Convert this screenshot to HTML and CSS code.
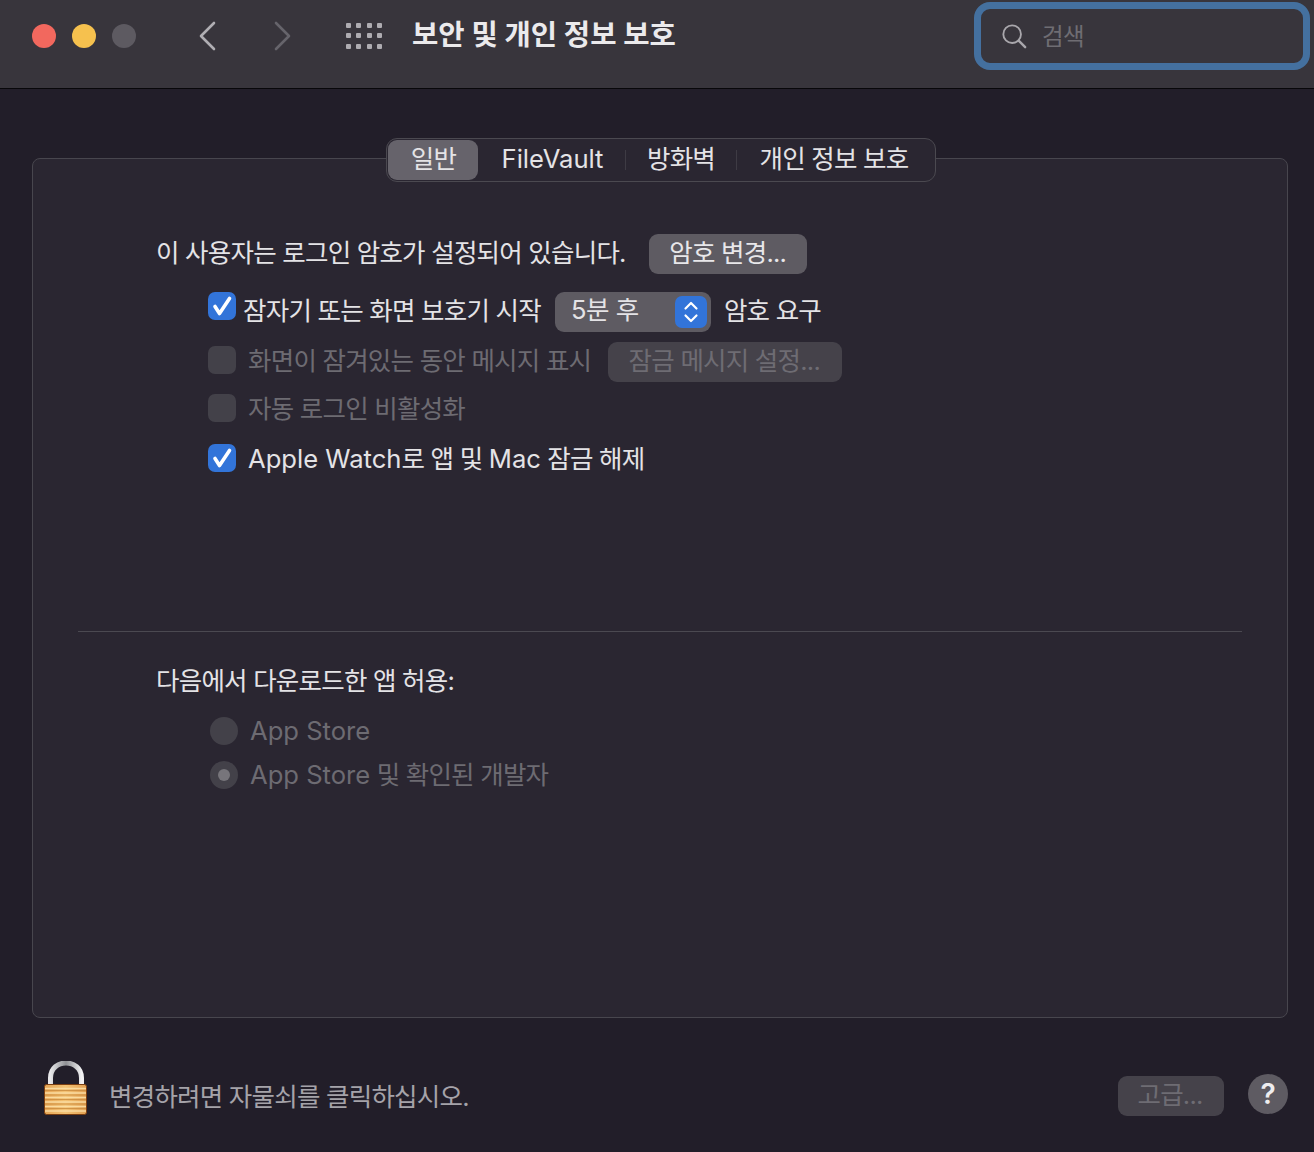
FILE: index.html
```html
<!DOCTYPE html>
<html lang="ko">
<head>
<meta charset="utf-8">
<title>보안 및 개인 정보 보호</title>
<link rel="stylesheet" href="styles.css">
</head>
<body>
<div class="window">
  <header class="titlebar">
    <div class="lights">
      <span class="light red"></span>
      <span class="light yellow"></span>
      <span class="light gray"></span>
    </div>
    <div class="nav">
      <svg class="chev" width="18" height="30" viewBox="0 0 18 30"><path d="M16 2 L3 15 L16 28" fill="none" stroke="#b0aeb3" stroke-width="2.6" stroke-linecap="round" stroke-linejoin="round"/></svg>
      <svg class="chev" width="18" height="30" viewBox="0 0 18 30"><path d="M2 2 L15 15 L2 28" fill="none" stroke="#66646b" stroke-width="2.6" stroke-linecap="round" stroke-linejoin="round"/></svg>
    </div>
    <svg class="grid" width="36" height="26" viewBox="0 0 36 26" fill="#aeacb1">
      <rect x="0" y="0" width="5" height="5" rx="1"/><rect x="10" y="0" width="5" height="5" rx="1"/><rect x="21" y="0" width="5" height="5" rx="1"/><rect x="31" y="0" width="5" height="5" rx="1"/>
      <rect x="0" y="10" width="5" height="5" rx="1"/><rect x="10" y="10" width="5" height="5" rx="1"/><rect x="21" y="10" width="5" height="5" rx="1"/><rect x="31" y="10" width="5" height="5" rx="1"/>
      <rect x="0" y="21" width="5" height="5" rx="1"/><rect x="10" y="21" width="5" height="5" rx="1"/><rect x="21" y="21" width="5" height="5" rx="1"/><rect x="31" y="21" width="5" height="5" rx="1"/>
    </svg>
    <h1 class="title">보안 및 개인 정보 보호</h1>
    <div class="search">
      <svg width="26" height="26" viewBox="0 0 28 28"><circle cx="12" cy="12" r="9.5" fill="none" stroke="#a9a7ac" stroke-width="2"/><path d="M19 19 L26 26" stroke="#a9a7ac" stroke-width="2.6" stroke-linecap="round"/></svg>
      <span class="placeholder">검색</span>
    </div>
  </header>

  <main class="content">
    <section class="panel">
      <nav class="tabs">
        <span class="tab tab-on">일반</span>
        <span class="tab tab-file"><span class="lat">FileVault</span></span>
        <span class="sep"></span>
        <span class="tab tab-fire">방화벽</span>
        <span class="sep"></span>
        <span class="tab tab-priv">개인 정보 보호</span>
      </nav>

      <div class="upper">
        <div class="row row-pw">
          <span class="label">이 사용자는 로그인 암호가 설정되어 있습니다.</span>
          <button class="btn btn-change">암호 변경...</button>
        </div>
        <div class="row row-sleep">
          <span class="check on"><svg width="28" height="28" viewBox="0 0 28 28"><path d="M7 14.500 L11.500 21.500 L21.500 6.500" fill="none" stroke="#fff" stroke-width="3.600" stroke-linecap="round" stroke-linejoin="round"/></svg></span>
          <span class="label label-sleep">잠자기 또는 화면 보호기 시작</span>
          <span class="popup">
            <span class="popup-value">5분 후</span>
            <span class="stepper"><svg width="16" height="26" viewBox="0 0 16 26"><path d="M2.500 9.500 L8 4 L13.500 9.500 M2.500 16.500 L8 22 L13.500 16.500" fill="none" stroke="#fff" stroke-width="2.200" stroke-linecap="round" stroke-linejoin="round"/></svg></span>
          </span>
          <span class="label label-req">암호 요구</span>
        </div>
        <div class="row row-msg">
          <span class="check off"></span>
          <span class="label dim label-check">화면이 잠겨있는 동안 메시지 표시</span>
          <button class="btn btn-off btn-msg">잠금 메시지 설정...</button>
        </div>
        <div class="row row-auto">
          <span class="check off"></span>
          <span class="label dim label-check">자동 로그인 비활성화</span>
        </div>
        <div class="row row-watch">
          <span class="check on"><svg width="28" height="28" viewBox="0 0 28 28"><path d="M7 14.500 L11.500 21.500 L21.500 6.500" fill="none" stroke="#fff" stroke-width="3.600" stroke-linecap="round" stroke-linejoin="round"/></svg></span>
          <span class="label label-check"><span class="lat">Apple Watch</span>로 앱 및 <span class="lat">Mac</span> 잠금 해제</span>
        </div>
      </div>

      <hr class="divider">

      <div class="lower">
        <div class="label heading">다음에서 다운로드한 앱 허용:</div>
        <div class="row row-radio1">
          <span class="radio"></span>
          <span class="label dim"><span class="lat">App Store</span></span>
        </div>
        <div class="row row-radio2">
          <span class="radio radio-on"></span>
          <span class="label dim"><span class="lat">App Store</span> 및 확인된 개발자</span>
        </div>
      </div>
    </section>

    <footer class="footer">
      <svg class="lock" width="44" height="54" viewBox="0 0 44 54">
        <defs>
          <linearGradient id="shackle" x1="0" y1="0" x2="1" y2="0">
            <stop offset="0" stop-color="#e8e8ea"/><stop offset="0.5" stop-color="#8f9094"/><stop offset="1" stop-color="#f2f2f3"/>
          </linearGradient>
          <linearGradient id="brass" x1="0" y1="0" x2="1" y2="0">
            <stop offset="0" stop-color="#e6a555"/><stop offset="0.5" stop-color="#f3c274"/><stop offset="1" stop-color="#e2a052"/>
          </linearGradient>
        </defs>
        <path d="M6.500 24 V17 C6.500 -3 37.500 -3 37.500 17 V24" fill="none" stroke="url(#shackle)" stroke-width="5"/>
        <rect x="0.500" y="23.500" width="42" height="30" rx="2" fill="url(#brass)" stroke="#7c3f10"/>
        <g stroke="#fbe0a6" stroke-width="1.300" opacity="0.9">
          <path d="M1 27.500H42M1 32H42M1 36.500H42M1 41H42M1 45.500H42M1 50H42"/>
        </g>
        <g stroke="#c98a3e" stroke-width="0.800">
          <path d="M1 29.500H42M1 34H42M1 38.500H42M1 43H42M1 47.500H42"/>
        </g>
      </svg>
      <span class="label lock-text">변경하려면 자물쇠를 클릭하십시오.</span>
      <button class="btn btn-off btn-adv">고급...</button>
      <span class="help">?</span>
    </footer>
  </main>
</div>
</body>
</html>
```

FILE: styles.css
```css
* { box-sizing: border-box; }
html, body { margin: 0; padding: 0; }
body {
  width: 1314px;
  height: 1152px;
  overflow: hidden;
  background: #221e29;
  font-family: Inter, "Noto Sans CJK KR", sans-serif;
  font-size: 25.5px;
  letter-spacing: -0.77px;
  color: #e4e3e6;
}
.lat { font-size: 25.6px; letter-spacing: 0; }
.window { display: flex; flex-direction: column; height: 1152px; }

.titlebar {
  flex: none;
  height: 89px;
  display: flex;
  align-items: flex-start;
  padding-left: 32px;
  background: #38353c;
  border-bottom: 1px solid #08070a;
}
.lights { display: flex; gap: 16px; margin-top: 24px; }
.light { width: 24px; height: 24px; border-radius: 50%; }
.red { background: #f2685e; }
.yellow { background: #f6c14e; }
.gray { background: #5d5a61; }
.nav { display: flex; gap: 58px; margin: 21px 0 0 62px; }
.grid { margin: 23px 0 0 54px; }
.title {
  margin: 14px 0 0 30px;
  font-size: 28.600px;
  line-height: 42px;
  letter-spacing: 0;
  font-weight: 700;
  color: #ebeaec;
  width: 562px;
  flex: none;
}
.search {
  width: 336px;
  height: 68px;
  margin-top: 2px;
  padding-left: 20px;
  display: flex;
  align-items: center;
  gap: 15px;
  background: #38353c;
  border: 7px solid #44709f;
  border-radius: 16px;
  flex: none;
}
.placeholder { color: #6f6d73; font-size: 23.500px; letter-spacing: -0.6px; padding-bottom: 2px; }

.content { flex: 1; display: flex; flex-direction: column; padding: 69px 26px 0 32px; }

.panel {
  position: relative;
  height: 860px;
  background: #2a2631;
  border: 1px solid #48464e;
  border-radius: 8px;
}
.tabs {
  position: absolute;
  top: -21px;
  left: 353px;
  width: 550px;
  height: 44px;
  display: flex;
  align-items: center;
  padding: 0 1px;
  background: #2a2631;
  border: 1px solid #4b4950;
  border-radius: 11px;
}
.tab { height: 40px; line-height: 37px; text-align: center; color: #e4e3e6; flex: none; }
.tab-on { width: 90px; padding-left: 1px; background: #66636b; border-radius: 9px; }
.tab-file { width: 147px; padding-left: 2px; }
.tab-fire { width: 110px; }
.tab-priv { width: 194px; }
.sep { width: 1px; height: 20px; background: #3e3b44; flex: none; }

.row { display: flex; align-items: center; }
.label { line-height: 40px; white-space: nowrap; }
.dim { color: #6d6b72; }

.upper { padding: 75px 0 0 123px; height: 472px; }
.row-pw { height: 40px; gap: 23px; }
.row-sleep { height: 40px; margin: 18px 0 0 52px; }
.row-msg { height: 40px; margin: 10px 0 0 52px; }
.row-auto { height: 40px; margin: 6px 0 0 52px; }
.row-watch { height: 40px; margin: 10px 0 0 52px; }
.row-pw .label, .row-sleep .label, .row-msg .label { padding-bottom: 2px; }
.row-auto .label, .row-watch .label { padding-top: 2px; }
.label-sleep { margin: 0 14px 0 7px; }
.label-check { margin-left: 12px; }
.label-req { margin-left: 13px; }
.row-sleep .check { margin-top: -12px; }
.row-msg .check { margin-top: -4px; }
.row-msg .dim { margin-right: 17px; }

.check {
  width: 28px;
  height: 28px;
  border-radius: 7px;
  flex: none;
}
.check svg { display: block; }
.check.on { background: #3274d9; }
.check.off { background: #434149; }

.btn {
  height: 40px;
  padding: 0;
  border: 0;
  border-radius: 9px;
  background: #5e5b62;
  color: #e8e7ea;
  font: inherit;
  letter-spacing: inherit;
  line-height: 36px;
  flex: none;
}
.btn-change { width: 158px; padding-bottom: 3px; }
.btn-off { background: #45424a; color: #6e6c73; padding: 0 2px 3px 0; }
.btn-msg { width: 234px; }
.btn-adv { width: 106px; margin: 15px 24px 0 auto; }

.popup {
  width: 156px;
  height: 40px;
  flex: none;
  display: flex;
  align-items: center;
  justify-content: space-between;
  padding: 0 4px 0 16px;
  background: #5e5b62;
  border-radius: 9px;
}
.popup-value { padding-bottom: 4px; line-height: 34px; letter-spacing: -0.4px; }
.stepper {
  width: 32px;
  height: 32px;
  display: flex;
  align-items: center;
  justify-content: center;
  background: #3274d9;
  border-radius: 7px;
}

.divider { margin: 0 45px; border: 0; height: 1px; background: #4b4951; }

.lower { padding: 29px 0 0 123px; }
.heading { height: 40px; }
.radio {
  width: 28px;
  height: 28px;
  border-radius: 50%;
  background: #434149;
  flex: none;
  display: flex;
  align-items: center;
  justify-content: center;
}
.radio-on::after { content: ""; width: 12px; height: 12px; border-radius: 50%; background: #77757b; }
.row-radio1 { height: 40px; margin: 10px 0 0 54px; gap: 12px; }
.row-radio2 { height: 40px; margin: 4px 0 0 54px; gap: 12px; }

.footer { display: flex; align-items: flex-start; height: 100px; padding-top: 43px; }
.lock { margin-left: 12px; flex: none; }
.lock-text { margin: 16px 0 0 21px; color: #a5a3a9; }
.help {
  width: 40px;
  height: 40px;
  margin-top: 13px;
  border-radius: 50%;
  background: #5e5b62;
  color: #eeedef;
  font-family: Inter, sans-serif;
  font-weight: 600;
  font-size: 28px;
  letter-spacing: 0;
  line-height: 40px;
  text-align: center;
  flex: none;
}
```
